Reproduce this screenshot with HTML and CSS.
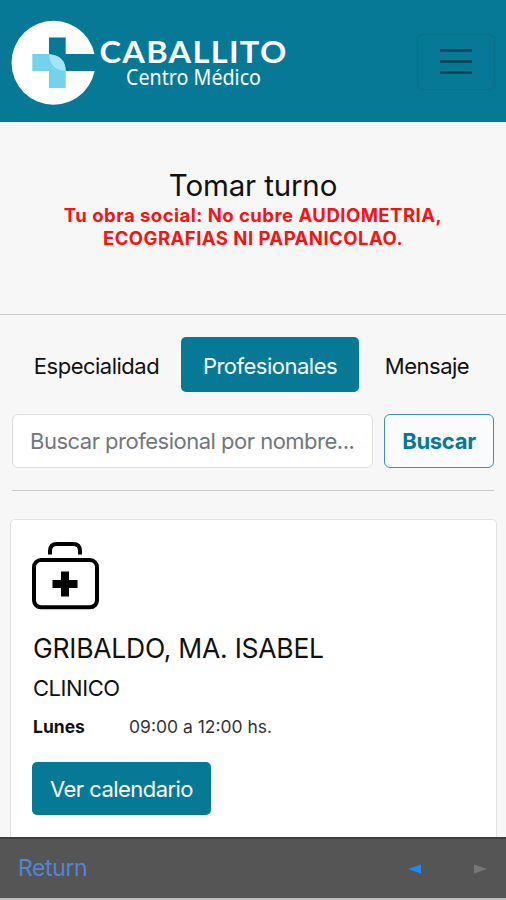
FILE: index.html
```html
<!DOCTYPE html>
<html lang="es">
<head>
<meta charset="utf-8">
<title>Caballito Centro Médico</title>
<link rel="stylesheet" href="styles.css">
</head>
<body>
<div class="app">
  <header class="navbar">
    <svg class="brand" width="280" height="90" viewBox="10 18 280 90" role="img" aria-label="Caballito Centro Médico">
      <circle cx="53.5" cy="62.7" r="42" fill="#fff"/>
      <path d="M49 37.5H65.7V54H100V71H65.7L49 54Z" fill="#057996"/>
      <path d="M32.3 54H49Q65.7 56 65.7 71V88H49V71H32.3Z" fill="#75d2ec"/>
      <path d="M49 54.5Q65 55 65.7 71Q50 70 49 54.5Z" fill="#a7e5f5"/>
      <text class="brand-name" x="99.5" y="62.8" textLength="188" lengthAdjust="spacingAndGlyphs">CABALLITO</text>
      <text class="brand-sub" x="126" y="84.8" textLength="135" lengthAdjust="spacingAndGlyphs">Centro Médico</text>
    </svg>
    <button class="toggler" aria-label="Menú">
      <svg width="36" height="30" viewBox="0 0 36 30"><path d="M2 3.3H34M2 14.5H34M2 25.5H34" stroke="#073f4e" stroke-width="2.5"/></svg>
    </button>
  </header>
  <main>
    <section class="intro">
      <h1>Tomar turno</h1>
      <p class="notice">Tu obra social: No cubre AUDIOMETRIA,<br>ECOGRAFIAS NI PAPANICOLAO.</p>
    </section>
    <nav class="tabs">
      <a class="tab tab-first">Especialidad</a>
      <a class="tab active">Profesionales</a>
      <a class="tab tab-last">Mensaje</a>
    </nav>
    <form class="search">
      <div class="field">Buscar profesional por nombre...</div>
      <button type="button" class="submit">Buscar</button>
    </form>
    <article class="card">
      <svg class="kit" width="67" height="68" viewBox="0 0 67 68" fill="none" stroke="#000">
        <path d="M18 12.5V9Q18 2 25 2H41Q48 2 48 9V12.5" stroke-width="4"/>
        <rect x="2" y="18" width="63" height="47.3" rx="7" stroke-width="4"/>
        <path d="M33 29.5V54.5M20.5 42H45.5" stroke-width="8"/>
      </svg>
      <h2>GRIBALDO, MA. ISABEL</h2>
      <h3>CLINICO</h3>
      <div class="hours"><b>Lunes</b><span>09:00 a 12:00 hs.</span></div>
      <button class="calendar">Ver calendario</button>
    </article>
  </main>
  <footer class="toolbar">
    <a class="return">Return</a>
    <svg class="back" width="13" height="10" viewBox="0 0 13 10"><path d="M0 5L13 .5V9.5Z" fill="#1d87ff"/></svg>
    <svg class="forward" width="13" height="10" viewBox="0 0 13 10"><path d="M13 5L0 .5V9.5Z" fill="#777"/></svg>
  </footer>
</div>
</body>
</html>
```
FILE: styles.css
```css
* { box-sizing: border-box; }
body { margin: 0; font-family: Inter, sans-serif; color: #111; background: #f7f7f7; }
button { font-family: inherit; margin: 0; padding: 0; }
.app { width: 506px; height: 900px; display: flex; flex-direction: column; overflow: hidden; }
.navbar { height: 122px; flex: none; background: #057996; border-bottom: 1px solid #137086; display: flex; justify-content: space-between; align-items: flex-start; padding: 18px 11px 0 10px; }
.brand { display: block; }
.brand text { fill: #fff; }
.brand-name { font: 700 30px Lato, sans-serif; letter-spacing: 1.2px; }
.brand-sub { font: 400 21px "Noto Sans", sans-serif; }
.toggler { width: 78px; height: 56px; margin-top: 16px; border: 1px solid #0b7089; border-radius: 6px; background: none; display: flex; align-items: center; justify-content: center; }
main { flex: 1; min-height: 0; overflow: hidden; }
.intro { height: 193px; border-bottom: 1px solid #c8c8c8; padding-top: 45px; text-align: center; }
h1, h2, h3, p { margin: 0; font-weight: 400; }
h1 { font-size: 29.5px; line-height: 37px; letter-spacing: -.15px; }
.notice { color: #f91212; font-size: 18.5px; font-weight: 700; line-height: 22.5px; letter-spacing: .48px; white-space: nowrap; }
.tabs { display: flex; height: 55px; margin-top: 22px; }
.tab { display: flex; align-items: center; justify-content: center; font-size: 22px; letter-spacing: -.5px; padding-top: 2px; }
.tab-first { width: 169px; margin-left: 12px; }
.tab.active { width: 178px; background: #057996; color: #fff; border-radius: 5px; }
.tab-last { width: 136px; }
.search { display: flex; gap: 11px; margin: 22px 12px 28px; padding-bottom: 22px; border-bottom: 1px solid #c8c8c8; }
.field { width: 361px; height: 54px; border: 1px solid #dcdfe2; border-radius: 6px; background: #fff; color: #70777d; font-size: 22px; line-height: 53px; letter-spacing: -.5px; padding-left: 17px; white-space: nowrap; }
.submit { width: 110px; height: 54px; border: 1px solid #3d93aa; border-radius: 6px; background: #f9fbfc; color: #057996; font-size: 22px; font-weight: 700; letter-spacing: -.3px; }
.card { margin: 0 9px 0 10px; height: 340px; background: #fff; border: 1px solid #e2e2e2; border-radius: 5px; padding: 22px; }
.kit { display: block; margin-left: -1px; }
h2 { font-size: 26.5px; line-height: 34px; margin-top: 21px; letter-spacing: -.25px; white-space: nowrap; }
h3 { font-size: 22px; line-height: 28px; margin-top: 9px; letter-spacing: -.45px; }
.hours { display: flex; font-size: 17.5px; line-height: 24px; margin-top: 13px; color: #333; }
.hours b { width: 96px; color: #111; }
.calendar { display: block; width: 179px; height: 53px; margin: 23px 0 0 -1px; border: 0; border-radius: 5px; background: #057996; color: #fff; font-size: 22px; letter-spacing: -.55px; }
.toolbar { height: 63px; flex: none; background: #555; border-top: 2px solid #3e3e3e; border-bottom: 2px solid #c0c0c0; display: flex; align-items: center; padding: 2px 19px 2px 18px; }
.return { font-size: 23px; letter-spacing: -.4px; color: #4f86d8; margin: -2px auto 0 0; }
.back { margin-right: 53px; }
```
